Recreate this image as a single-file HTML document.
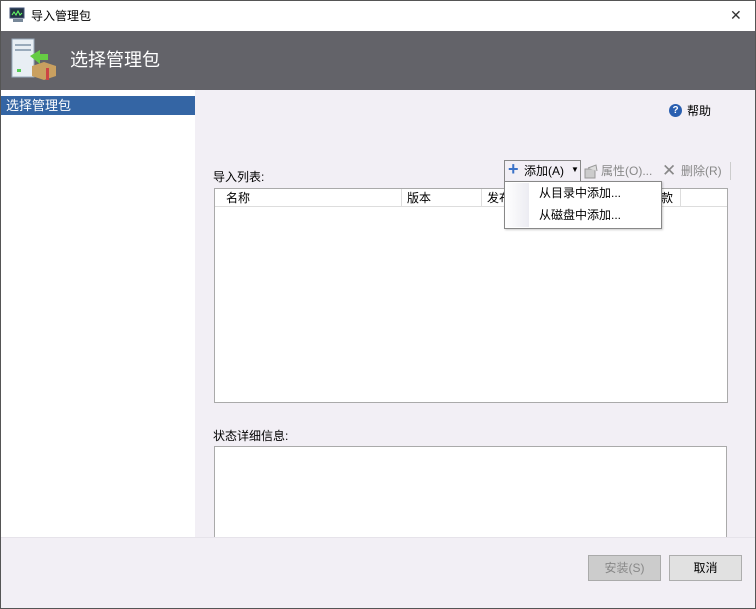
<!DOCTYPE html><html><head><meta charset="utf-8"><style>
*{margin:0;padding:0;box-sizing:border-box}
body{width:756px;height:609px;position:relative;overflow:hidden;font-family:"Liberation Sans","Noto Sans CJK SC",sans-serif;font-size:12px;line-height:1.6;color:#000;background:#f2eff5}
.a{position:absolute}
</style></head><body>
<div class="a" style="left:0;top:0;width:756px;height:609px;border:1px solid #555"></div>
<div class="a" style="left:1px;top:1px;width:754px;height:30px;background:#fff"></div>
<svg class="a" style="left:9px;top:7px" width="18" height="16"><rect x="1" y="1" width="14" height="10" fill="#234" stroke="#457"/><path d="M3 8 L5 5 L7 8 L9 4 L11 8 L13 6" stroke="#6f6" fill="none"/><rect x="4" y="12" width="10" height="3" fill="#789"/></svg>
<div class="a" style="left:31px;top:7px;font-size:12px">导入管理包</div>
<div class="a" style="left:730px;top:4px;font-size:14px;color:#333">✕</div>
<div class="a" style="left:1px;top:31px;width:754px;height:59px;background:#636369"></div>
<svg class="a" style="left:10px;top:36px" width="50" height="48"><rect x="2" y="3" width="22" height="38" fill="#e8eef4" stroke="#9ab"/><rect x="5" y="8" width="16" height="2" fill="#9ab"/><rect x="5" y="13" width="16" height="2" fill="#9ab"/><rect x="7" y="33" width="4" height="3" fill="#5c5"/><path d="M20 20 L30 14 L30 18 L38 18 L38 24 L30 24 L30 28Z" fill="#6c4"/><path d="M22 30 L34 26 L46 30 L46 40 L34 44 L22 40Z" fill="#c9a060"/><rect x="36" y="32" width="3" height="12" fill="#c44"/></svg>
<div class="a" style="left:70px;top:46px;font-size:18px;color:#fff">选择管理包</div>
<div class="a" style="left:1px;top:90px;width:194px;height:447px;background:#fff"></div>
<div class="a" style="left:1px;top:96px;width:194px;height:19px;background:#3465a4;color:#fff;padding:0 0 0 5px;font-size:13px;line-height:19px">选择管理包</div>
<div class="a" style="left:669px;top:104px;width:13px;height:13px;border-radius:50%;background:#2a5fb0;color:#fff;font-size:10px;font-weight:bold;text-align:center;line-height:13px">?</div>
<div class="a" style="left:687px;top:102px">帮助</div>
<div class="a" style="left:213px;top:168px">导入列表:</div>
<div class="a" style="left:214px;top:188px;width:514px;height:215px;background:#fff;border:1px solid #aaa"></div>
<div class="a" style="left:215px;top:189px;width:512px;height:18px;border-bottom:1px solid #ddd;background:#fff"></div>
<div class="a" style="left:226px;top:189px">名称</div>
<div class="a" style="left:401px;top:189px;height:18px;border-left:1px solid #ddd"></div>
<div class="a" style="left:407px;top:189px">版本</div>
<div class="a" style="left:481px;top:189px;height:18px;border-left:1px solid #ddd"></div>
<div class="a" style="left:487px;top:189px">发布</div>
<div class="a" style="left:661px;top:189px">款</div>
<div class="a" style="left:680px;top:189px;height:18px;border-left:1px solid #ddd"></div>
<div class="a" style="left:504px;top:160px;width:77px;height:22px;border:1px solid #888;border-bottom:none;background:#f2eff5"></div>
<div class="a" style="left:508px;top:158px;color:#3a72c8;font-size:18px;font-weight:bold;line-height:1.3">+</div>
<div class="a" style="left:524px;top:162px">添加(A)</div>
<div class="a" style="left:571px;top:166px;font-size:8px;line-height:1">▼</div>
<svg class="a" style="left:583px;top:163px" width="16" height="16"><rect x="2" y="6" width="10" height="9" fill="#ccc" stroke="#999"/><path d="M5 5 L13 2 L14 8" fill="#ddd" stroke="#999"/></svg>
<div class="a" style="left:601px;top:162px;color:#888">属性(O)...</div>
<div class="a" style="left:662px;top:160px;color:#888;font-size:17px;line-height:1.3">✕</div>
<div class="a" style="left:681px;top:162px;color:#888">删除(R)</div>
<div class="a" style="left:730px;top:162px;height:18px;border-left:1px solid #ccc"></div>
<div class="a" style="left:504px;top:181px;width:158px;height:48px;border:1px solid #888;background:#fff;box-shadow:1px 1px 2px rgba(0,0,0,.2)"></div>
<div class="a" style="left:505px;top:183px;width:24px;height:44px;background:linear-gradient(90deg,#fff,#ececf2)"></div>
<div class="a" style="left:539px;top:184px">从目录中添加...</div>
<div class="a" style="left:539px;top:206px">从磁盘中添加...</div>
<div class="a" style="left:213px;top:427px">状态详细信息:</div>
<div class="a" style="left:214px;top:446px;width:513px;height:100px;background:#fff;border:1px solid #aaa;border-bottom:none"></div>
<div class="a" style="left:1px;top:537px;width:754px;height:71px;background:#f2eff5;border-top:1px solid #e6e3ea"></div>
<div class="a" style="left:588px;top:555px;width:73px;height:26px;background:#ccc;border:1px solid #aaa;color:#888;text-align:center;line-height:24px">安装(S)</div>
<div class="a" style="left:669px;top:555px;width:73px;height:26px;background:#e1e1e1;border:1px solid #adadad;text-align:center;line-height:24px">取消</div>
</body></html>
